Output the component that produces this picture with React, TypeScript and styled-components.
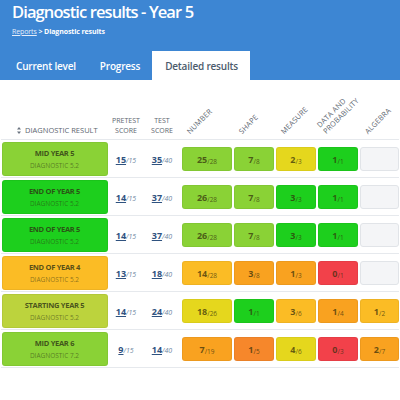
import { Fragment } from "react";
import styled, { createGlobalStyle } from "styled-components";

const GlobalStyle = createGlobalStyle`
  body {
    margin: 0;
    background: #ffffff;
    font-family: "Open Sans", "Liberation Sans", sans-serif;
  }
`;

const colors: Record<string, string> = {
  lime: "#8ad236",
  green: "#1dcf1d",
  amber: "#fbbc25",
  orange: "#f9a220",
  dark: "#f6872b",
  red: "#f2414a",
  yellow: "#e5d71d",
  olive: "#bcd33d",
  empty: "#f4f5f7",
};

type Score = { got: number; of: number; tone: string } | null;

type Row = {
  title: string;
  sub: string;
  tone: string;
  pre: [number, number];
  test: [number, number];
  scores: Score[];
};

const rows: Row[] = [
  {
    title: "MID YEAR 5",
    sub: "DIAGNOSTIC 5.2",
    tone: "lime",
    pre: [15, 15],
    test: [35, 40],
    scores: [
      { got: 25, of: 28, tone: "lime" },
      { got: 7, of: 8, tone: "lime" },
      { got: 2, of: 3, tone: "yellow" },
      { got: 1, of: 1, tone: "green" },
      null,
    ],
  },
  {
    title: "END OF YEAR 5",
    sub: "DIAGNOSTIC 5.2",
    tone: "green",
    pre: [14, 15],
    test: [37, 40],
    scores: [
      { got: 26, of: 28, tone: "lime" },
      { got: 7, of: 8, tone: "lime" },
      { got: 3, of: 3, tone: "green" },
      { got: 1, of: 1, tone: "green" },
      null,
    ],
  },
  {
    title: "END OF YEAR 5",
    sub: "DIAGNOSTIC 5.2",
    tone: "green",
    pre: [14, 15],
    test: [37, 40],
    scores: [
      { got: 26, of: 28, tone: "lime" },
      { got: 7, of: 8, tone: "lime" },
      { got: 3, of: 3, tone: "green" },
      { got: 1, of: 1, tone: "green" },
      null,
    ],
  },
  {
    title: "END OF YEAR 4",
    sub: "DIAGNOSTIC 5.2",
    tone: "amber",
    pre: [13, 15],
    test: [18, 40],
    scores: [
      { got: 14, of: 28, tone: "amber" },
      { got: 3, of: 8, tone: "orange" },
      { got: 1, of: 3, tone: "orange" },
      { got: 0, of: 1, tone: "red" },
      null,
    ],
  },
  {
    title: "STARTING YEAR 5",
    sub: "DIAGNOSTIC 5.2",
    tone: "olive",
    pre: [14, 15],
    test: [24, 40],
    scores: [
      { got: 18, of: 26, tone: "yellow" },
      { got: 1, of: 1, tone: "green" },
      { got: 3, of: 6, tone: "amber" },
      { got: 1, of: 4, tone: "orange" },
      { got: 1, of: 2, tone: "amber" },
    ],
  },
  {
    title: "MID YEAR 6",
    sub: "DIAGNOSTIC 7.2",
    tone: "lime",
    pre: [9, 15],
    test: [14, 40],
    scores: [
      { got: 7, of: 19, tone: "orange" },
      { got: 1, of: 5, tone: "dark" },
      { got: 4, of: 6, tone: "yellow" },
      { got: 0, of: 3, tone: "red" },
      { got: 2, of: 7, tone: "orange" },
    ],
  },
];

const Header = styled.header`
  background: #3d86d3;
  color: #ffffff;
`;

const Title = styled.h1`
  margin: 0;
  padding: 0 12px;
  font-size: 16.5px;
  line-height: 24px;
  font-weight: 600;
  letter-spacing: -0.9px;
  white-space: nowrap;
`;

const Crumbs = styled.div`
  padding: 0 12px;
  margin-top: 2px;
  font-size: 7px;
  line-height: 12px;
  font-weight: 700;
  letter-spacing: -0.1px;

  a {
    color: #e4eefa;
    font-weight: 400;
    text-decoration: underline;
  }
`;

const Tabs = styled.nav`
  display: flex;
  margin-top: 13px;
  padding-left: 4px;
`;

const Tab = styled.div<{ $active?: boolean }>`
  height: 29px;
  padding: 0 12px;
  display: flex;
  align-items: center;
  font-size: 10px;
  letter-spacing: -0.2px;
  font-weight: 600;
  color: ${(p) => (p.$active ? "#4b5b6c" : "#ffffff")};
  background: ${(p) => (p.$active ? "#ffffff" : "transparent")};
  padding-left: ${(p) => (p.$active ? "13px" : "12px")};
`;

const Table = styled.div`
  display: grid;
  grid-template-columns: 107px 36px 36px 52px 42px 42px 42px 41px;
  padding-left: 1px;
`;

const HeadCell = styled.div<{ $align?: string }>`
  height: 60px;
  border-bottom: 1px solid #e6e9ed;
  display: flex;
  align-items: flex-end;
  justify-content: ${(p) => p.$align || "center"};
  padding-bottom: 3px;
  box-sizing: border-box;
  font-size: 7px;
  line-height: 10px;
  color: #5d6670;
  text-align: center;
`;

const HeadLabel = styled.span`
  display: flex;
  align-items: center;
  gap: 4px;
  font-size: 7.5px;
  padding-left: 16px;
  padding-bottom: 1px;
`;

const SlantCell = styled(HeadCell)`
  justify-content: flex-start;
  padding-left: 11px;
  padding-bottom: 4px;
`;

const Slant = styled.span`
  display: block;
  white-space: nowrap;
  text-align: left;
  font-size: 7.3px;
  line-height: 8.5px;
  letter-spacing: 0.2px;
  transform: rotate(-45deg);
  transform-origin: 0 100%;
`;

const Cell = styled.div`
  height: 38px;
  padding: 2px 0 1px;
  box-sizing: border-box;
  border-bottom: 1px solid #e6e9ed;
  display: flex;
  align-items: center;
  justify-content: center;
`;

const ResultBox = styled.div<{ $tone: string }>`
  width: 106px;
  height: 34px;
  border-radius: 3px;
  background: ${(p) => colors[p.$tone]};
  box-shadow: inset 0 0 0 1px rgba(0, 0, 0, 0.05);
  display: flex;
  flex-direction: column;
  align-items: center;
  justify-content: center;
  gap: 4px;
`;

const ResultTitle = styled.div`
  font-size: 7.5px;
  line-height: 9px;
  font-weight: 700;
  letter-spacing: -0.3px;
  color: rgba(45, 50, 20, 0.8);
`;

const ResultSub = styled.div`
  font-size: 6.5px;
  line-height: 8px;
  color: rgba(45, 50, 20, 0.55);
`;

const ScoreLink = styled.span`
  font-size: 9px;
  color: #2f527f;
  white-space: nowrap;

  b {
    font-weight: 700;
    text-decoration: underline;
  }

  small {
    font-size: 7px;
    font-style: italic;
    color: #6f87a3;
  }
`;

const ScoreCell = styled(Cell)`
  justify-content: flex-end;
`;

const ScoreBox = styled.div<{ $tone: string }>`
  width: calc(100% - 2px);
  height: 24px;
  border-radius: 3px;
  box-sizing: border-box;
  background: ${(p) => colors[p.$tone]};
  border: 1px solid
    ${(p) => (p.$tone === "empty" ? "#e1e4e8" : "rgba(0, 0, 0, 0.05)")};
  display: flex;
  align-items: center;
  justify-content: center;
  font-size: 9px;
  font-weight: 700;
  color: rgba(50, 45, 10, 0.72);

  small {
    font-size: 6.5px;
    font-weight: 400;
    margin-top: 4px;
  }
`;

const SortIcon = () => (
  <svg width="4" height="7" viewBox="0 0 4 7">
    <path d="M2 0 L4 2.5 H0 Z M2 7 L4 4.5 H0 Z" fill="#6b7480" />
  </svg>
);

const Fraction = ({ got, of }: { got: number; of: number }) => (
  <ScoreLink>
    <b>{got}</b>
    <small>/{of}</small>
  </ScoreLink>
);

export default function App() {
  return (
    <>
      <GlobalStyle />
      <Header>
        <Title>Diagnostic results - Year 5</Title>
        <Crumbs>
          <a>Reports</a> &gt; Diagnostic results
        </Crumbs>
        <Tabs>
          <Tab>Current level</Tab>
          <Tab>Progress</Tab>
          <Tab $active>Detailed results</Tab>
        </Tabs>
      </Header>
      <Table>
        <HeadCell $align="flex-start">
          <HeadLabel>
            <SortIcon />
            DIAGNOSTIC RESULT
          </HeadLabel>
        </HeadCell>
        <HeadCell>
          PRETEST
          <br />
          SCORE
        </HeadCell>
        <HeadCell>
          TEST
          <br />
          SCORE
        </HeadCell>
        <SlantCell>
          <Slant>NUMBER</Slant>
        </SlantCell>
        <SlantCell>
          <Slant>SHAPE</Slant>
        </SlantCell>
        <SlantCell>
          <Slant>MEASURE</Slant>
        </SlantCell>
        <SlantCell>
          <Slant>
            DATA AND
            <br />
            PROBABILITY
          </Slant>
        </SlantCell>
        <SlantCell>
          <Slant>ALGEBRA</Slant>
        </SlantCell>

        {rows.map((r, i) => (
          <Fragment key={i}>
            <Cell>
              <ResultBox $tone={r.tone}>
                <ResultTitle>{r.title}</ResultTitle>
                <ResultSub>{r.sub}</ResultSub>
              </ResultBox>
            </Cell>
            <Cell>
              <Fraction got={r.pre[0]} of={r.pre[1]} />
            </Cell>
            <Cell>
              <Fraction got={r.test[0]} of={r.test[1]} />
            </Cell>
            {r.scores.map((s, j) => (
              <ScoreCell key={j}>
                <ScoreBox $tone={s ? s.tone : "empty"}>
                  {s && (
                    <>
                      {s.got}
                      <small>/{s.of}</small>
                    </>
                  )}
                </ScoreBox>
              </ScoreCell>
            ))}
          </Fragment>
        ))}
      </Table>
    </>
  );
}
